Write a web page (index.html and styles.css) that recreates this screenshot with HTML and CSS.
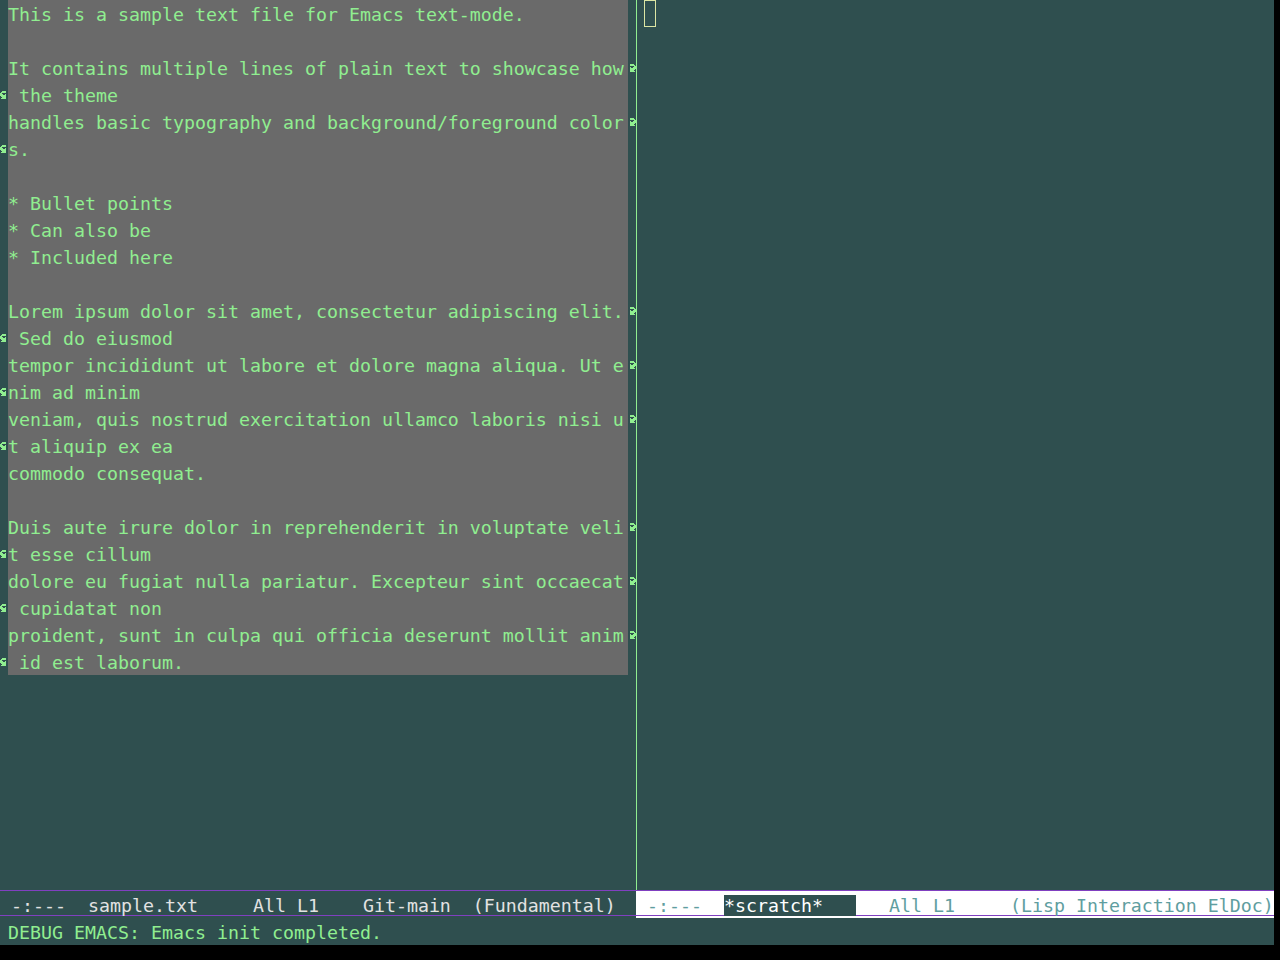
FILE: index.html
```html
<!DOCTYPE html>
<html lang="en">
<head>
    <meta charset="UTF-8">
    <title>Emacs - sample.txt</title>
    <link rel="stylesheet" href="styles.css">
</head>
<body>

<svg class="defs" width="0" height="0">
    <!-- fringe bitmaps, 8x8 like Emacs' curly arrows -->
    <symbol id="curly-r" viewBox="0 0 8 8">
        <path d="M2 0h4v1H2z M2 1h5v1H2z M6 2h2v1H6z M2 3h1v1H2z M5 3h3v1H5z M2 4h6v1H2z M2 5h5v1H2z M2 6h4v1H2z M2 7h5v1H2z"/>
    </symbol>
    <symbol id="curly-l" viewBox="0 0 8 8">
        <path d="M2 0h4v1H2z M1 1h5v1H1z M0 2h2v1H0z M0 3h3v1H0z M5 3h1v1H5z M0 4h6v1H0z M1 5h5v1H1z M2 6h4v1H2z M1 7h5v1H1z"/>
    </symbol>
</svg>

<div class="frame">
    <div class="windows">
        <div class="window window-left">
            <div class="line"><span class="fringe"></span><span class="text">This is a sample text file for Emacs text-mode.</span><span class="fringe"></span></div>
            <div class="line"><span class="fringe"></span><span class="text"></span><span class="fringe"></span></div>
            <div class="line"><span class="fringe"></span><span class="text">It contains multiple lines of plain text to showcase how</span><span class="fringe"><svg class="arrow"><use href="#curly-r"/></svg></span></div>
            <div class="line"><span class="fringe"><svg class="arrow"><use href="#curly-l"/></svg></span><span class="text"> the theme</span><span class="fringe"></span></div>
            <div class="line"><span class="fringe"></span><span class="text">handles basic typography and background/foreground color</span><span class="fringe"><svg class="arrow"><use href="#curly-r"/></svg></span></div>
            <div class="line"><span class="fringe"><svg class="arrow"><use href="#curly-l"/></svg></span><span class="text">s.</span><span class="fringe"></span></div>
            <div class="line"><span class="fringe"></span><span class="text"></span><span class="fringe"></span></div>
            <div class="line"><span class="fringe"></span><span class="text">* Bullet points</span><span class="fringe"></span></div>
            <div class="line"><span class="fringe"></span><span class="text">* Can also be</span><span class="fringe"></span></div>
            <div class="line"><span class="fringe"></span><span class="text">* Included here</span><span class="fringe"></span></div>
            <div class="line"><span class="fringe"></span><span class="text"></span><span class="fringe"></span></div>
            <div class="line"><span class="fringe"></span><span class="text">Lorem ipsum dolor sit amet, consectetur adipiscing elit.</span><span class="fringe"><svg class="arrow"><use href="#curly-r"/></svg></span></div>
            <div class="line"><span class="fringe"><svg class="arrow"><use href="#curly-l"/></svg></span><span class="text"> Sed do eiusmod</span><span class="fringe"></span></div>
            <div class="line"><span class="fringe"></span><span class="text">tempor incididunt ut labore et dolore magna aliqua. Ut e</span><span class="fringe"><svg class="arrow"><use href="#curly-r"/></svg></span></div>
            <div class="line"><span class="fringe"><svg class="arrow"><use href="#curly-l"/></svg></span><span class="text">nim ad minim</span><span class="fringe"></span></div>
            <div class="line"><span class="fringe"></span><span class="text">veniam, quis nostrud exercitation ullamco laboris nisi u</span><span class="fringe"><svg class="arrow"><use href="#curly-r"/></svg></span></div>
            <div class="line"><span class="fringe"><svg class="arrow"><use href="#curly-l"/></svg></span><span class="text">t aliquip ex ea</span><span class="fringe"></span></div>
            <div class="line"><span class="fringe"></span><span class="text">commodo consequat.</span><span class="fringe"></span></div>
            <div class="line"><span class="fringe"></span><span class="text"></span><span class="fringe"></span></div>
            <div class="line"><span class="fringe"></span><span class="text">Duis aute irure dolor in reprehenderit in voluptate veli</span><span class="fringe"><svg class="arrow"><use href="#curly-r"/></svg></span></div>
            <div class="line"><span class="fringe"><svg class="arrow"><use href="#curly-l"/></svg></span><span class="text">t esse cillum</span><span class="fringe"></span></div>
            <div class="line"><span class="fringe"></span><span class="text">dolore eu fugiat nulla pariatur. Excepteur sint occaecat</span><span class="fringe"><svg class="arrow"><use href="#curly-r"/></svg></span></div>
            <div class="line"><span class="fringe"><svg class="arrow"><use href="#curly-l"/></svg></span><span class="text"> cupidatat non</span><span class="fringe"></span></div>
            <div class="line"><span class="fringe"></span><span class="text">proident, sunt in culpa qui officia deserunt mollit anim</span><span class="fringe"><svg class="arrow"><use href="#curly-r"/></svg></span></div>
            <div class="line"><span class="fringe"><svg class="arrow"><use href="#curly-l"/></svg></span><span class="text"> id est laborum.</span><span class="fringe"></span></div>
        </div>

        <div class="window window-right">
            <div class="cursor"></div>
        </div>
    </div>

    <div class="modelines">
        <div class="modeline modeline-active">
            <div class="ml-row"> -:---  sample.txt     All L1    Git-main  (Fundamental)</div>
        </div>
        <div class="modeline modeline-inactive">
            <div class="ml-row"> -:---  <span class="buffer-id">*scratch*   </span>   All L1     (Lisp Interaction ElDoc)</div>
        </div>
    </div>

    <div class="minibuffer">DEBUG EMACS: Emacs init completed.</div>
</div>

</body>
</html>
```

FILE: styles.css
```css
body {
    margin: 0;
    background-color: #000000;
    font-family: "DejaVu Sans Mono", "Liberation Mono", monospace;
    font-size: 18.27px;
    color: #90ee90;
}
.defs {
    position: absolute;
    width: 0;
    height: 0;
}
.frame {
    width: 1274px;
    height: 945px;
    background-color: #2f4f4f;
    display: flex;
    flex-direction: column;
}
.windows {
    display: flex;
    height: 890px;
}
.window-left {
    width: 636px;
    border-right: 1px solid #90ee90;
}
.window-right {
    width: 637px;
    padding-left: 7px;
    box-sizing: border-box;
}
.line {
    display: flex;
    height: 27px;
}
.fringe {
    width: 8px;
    display: flex;
    align-items: center;
}
.arrow {
    width: 8px;
    height: 8px;
    fill: #90ee90;
}
.text {
    width: 620px;
    height: 27px;
    line-height: 29px;
    white-space: pre;
    background-color: #6a6a6a;
    overflow: hidden;
}
.cursor {
    width: 12px;
    height: 27px;
    box-sizing: border-box;
    border: 1px solid #dce6a4;
}
.modelines {
    display: flex;
    height: 28px;
}
.modeline {
    border-top: 1px solid #8040c0;
    box-sizing: border-box;
    height: 28px;
}
.modeline-active {
    width: 636px;
    color: #e2e2e2;
}
.modeline-inactive {
    width: 638px;
    background-color: #ffffff;
    color: #5f9ea0;
}
.ml-row {
    height: 25px;
    box-sizing: border-box;
    border-bottom: 1px solid #8040c0;
    line-height: 30px;
    white-space: pre;
}
.buffer-id {
    background-color: #2f4f4f;
    color: #ffffff;
}
.minibuffer {
    height: 27px;
    line-height: 29px;
    padding-left: 8px;
    white-space: pre;
}
```
